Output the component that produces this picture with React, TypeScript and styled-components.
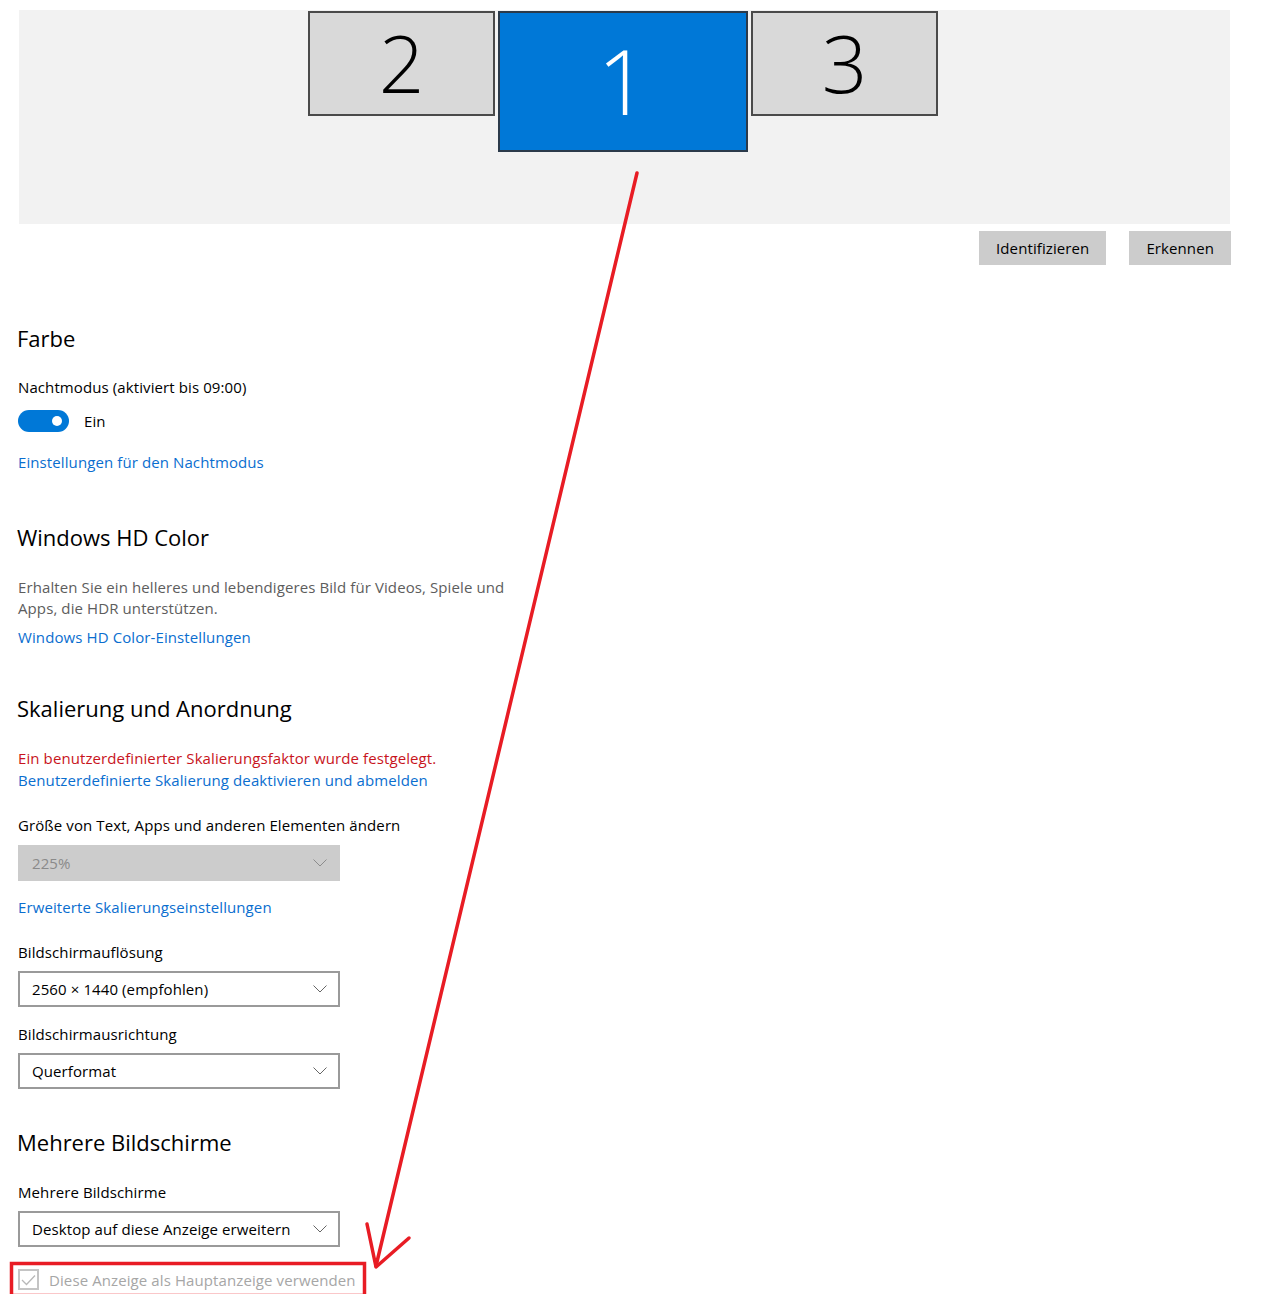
import React from "react";
import styled, { createGlobalStyle } from "styled-components";

const GlobalStyle = createGlobalStyle`
  html, body { margin: 0; padding: 0; background: #ffffff; }
  body { font-family: "Open Sans", "Noto Sans", Arial, sans-serif; color: #000; overflow: hidden; }
  * { box-sizing: border-box; }
`;

const Page = styled.div`
  position: relative;
  width: 1285px;
  height: 1294px;
  padding: 10px 0 0 18px;
  font-size: 15px;
  letter-spacing: 0.1px;
`;

const Canvas = styled.div`
  margin-left: 1px;
  width: 1211px;
  height: 214px;
  background: #f2f2f2;
  display: flex;
  justify-content: center;
  align-items: flex-start;
  gap: 3px;
  padding: 1px 3px 0 0;
`;

const Monitor = styled.div<{ $primary?: boolean }>`
  width: ${(p) => (p.$primary ? 250 : 187)}px;
  height: ${(p) => (p.$primary ? 141 : 105)}px;
  background: ${(p) => (p.$primary ? "#0078d7" : "#d9d9d9")};
  border: 2px solid ${(p) => (p.$primary ? "#2b3a4a" : "#4a4a4a")};
  color: ${(p) => (p.$primary ? "#ffffff" : "#000000")};
  font-size: ${(p) => (p.$primary ? 90 : 80)}px;
  font-weight: 300;
  line-height: 1;
  letter-spacing: 0;
  display: flex;
  align-items: center;
  justify-content: center;
  padding-bottom: 4px;
`;

const ButtonRow = styled.div`
  width: 1213px;
  display: flex;
  justify-content: flex-end;
  gap: 23px;
  margin-top: 7px;
`;

const Button = styled.div`
  height: 34px;
  padding: 0 17px;
  background: #cccccc;
  display: flex;
  align-items: center;
  font-size: 15px;
  color: #000;
`;

const Heading = styled.div<{ $mt: number }>`
  margin-top: ${(p) => p.$mt}px;
  margin-left: -1px;
  font-size: 22px;
  line-height: 30px;
  letter-spacing: 0;
  color: #000;
`;

const Label = styled.div<{ $mt: number }>`
  margin-top: ${(p) => p.$mt}px;
  line-height: 20px;
  color: #000;
`;

const Description = styled.div<{ $mt: number }>`
  margin-top: ${(p) => p.$mt}px;
  width: 495px;
  line-height: 21px;
  color: #5d5d5d;
`;

const Link = styled.div<{ $mt: number; $lh?: number }>`
  margin-top: ${(p) => p.$mt}px;
  line-height: ${(p) => p.$lh ?? 20}px;
  color: #0a6ecf;
`;

const Warning = styled.div<{ $mt: number }>`
  margin-top: ${(p) => p.$mt}px;
  line-height: 22px;
  color: #c8141c;
`;

const ToggleRow = styled.div`
  margin-top: 13px;
  display: flex;
  align-items: center;
  gap: 15px;
  height: 22px;
`;

const Toggle = styled.div`
  position: relative;
  width: 51px;
  height: 22px;
  border-radius: 11px;
  background: #0078d7;
`;

const Knob = styled.div`
  position: absolute;
  right: 7px;
  top: 6px;
  width: 10px;
  height: 10px;
  border-radius: 50%;
  background: #ffffff;
`;

const Select = styled.div<{ $mt: number; $disabled?: boolean }>`
  margin-top: ${(p) => p.$mt}px;
  width: 322px;
  height: 36px;
  display: flex;
  align-items: center;
  justify-content: space-between;
  background: ${(p) => (p.$disabled ? "#cccccc" : "#ffffff")};
  border: ${(p) => (p.$disabled ? "none" : "2px solid #9a9a9a")};
  padding-left: ${(p) => (p.$disabled ? 14 : 12)}px;
  padding-right: ${(p) => (p.$disabled ? 13 : 11)}px;
  color: ${(p) => (p.$disabled ? "#8a8a8a" : "#000")};
`;

const CheckRow = styled.div`
  margin-top: 22px;
  display: flex;
  align-items: center;
  gap: 10px;
  color: #a6a6a6;
  height: 21px;
`;

const CheckBox = styled.div`
  width: 21px;
  height: 21px;
  border: 2px solid #c4c4c4;
  display: flex;
  align-items: center;
  justify-content: center;
`;

const Overlay = styled.svg`
  position: absolute;
  left: 0;
  top: 0;
  pointer-events: none;
`;

const Chevron = ({ color }: { color: string }) => (
  <svg width="14" height="8" viewBox="0 0 14 8">
    <polyline points="0.5,0.5 7,7 13.5,0.5" fill="none" stroke={color} strokeWidth="1" />
  </svg>
);

export default function App() {
  return (
    <>
      <GlobalStyle />
      <Page>
        <Canvas>
          <Monitor>2</Monitor>
          <Monitor $primary>1</Monitor>
          <Monitor>3</Monitor>
        </Canvas>
        <ButtonRow>
          <Button>Identifizieren</Button>
          <Button>Erkennen</Button>
        </ButtonRow>

        <Heading $mt={58}>Farbe</Heading>
        <Label $mt={24}>Nachtmodus (aktiviert bis 09:00)</Label>
        <ToggleRow>
          <Toggle>
            <Knob />
          </Toggle>
          <span>Ein</span>
        </ToggleRow>
        <Link $mt={20}>Einstellungen für den Nachtmodus</Link>

        <Heading $mt={50}>Windows HD Color</Heading>
        <Description $mt={25}>
          Erhalten Sie ein helleres und lebendigeres Bild für Videos, Spiele und Apps, die HDR unterstützen.
        </Description>
        <Link $mt={8}>Windows HD Color-Einstellungen</Link>

        <Heading $mt={46}>Skalierung und Anordnung</Heading>
        <Warning $mt={24}>Ein benutzerdefinierter Skalierungsfaktor wurde festgelegt.</Warning>
        <Link $mt={0} $lh={22}>Benutzerdefinierte Skalierung deaktivieren und abmelden</Link>
        <Label $mt={24}>Größe von Text, Apps und anderen Elementen ändern</Label>
        <Select $mt={10} $disabled>
          <span>225%</span>
          <Chevron color="#8c8c8c" />
        </Select>
        <Link $mt={16}>Erweiterte Skalierungseinstellungen</Link>
        <Label $mt={25}>Bildschirmauflösung</Label>
        <Select $mt={9}>
          <span>2560 × 1440 (empfohlen)</span>
          <Chevron color="#666" />
        </Select>
        <Label $mt={17}>Bildschirmausrichtung</Label>
        <Select $mt={9}>
          <span>Querformat</span>
          <Chevron color="#666" />
        </Select>

        <Heading $mt={38}>Mehrere Bildschirme</Heading>
        <Label $mt={25}>Mehrere Bildschirme</Label>
        <Select $mt={9}>
          <span>Desktop auf diese Anzeige erweitern</span>
          <Chevron color="#666" />
        </Select>
        <CheckRow>
          <CheckBox>
            <svg width="15" height="12" viewBox="0 0 15 12">
              <polyline points="1,6 5.5,10.5 14,1.5" fill="none" stroke="#b8b8b8" strokeWidth="1.3" />
            </svg>
          </CheckBox>
          <span>Diese Anzeige als Hauptanzeige verwenden</span>
        </CheckRow>

        <Overlay width="1285" height="1294" viewBox="0 0 1285 1294">
          <g stroke="#e81c24" strokeWidth="3.5" fill="none" strokeLinecap="round" strokeLinejoin="round">
            <line x1="637" y1="173" x2="376" y2="1266" />
            <polyline points="367,1224 376,1267 409,1238" />
          </g>
          <rect x="11.5" y="1263.5" width="353" height="32" fill="none" stroke="#e81c24" strokeWidth="3.5" />
        </Overlay>
      </Page>
    </>
  );
}
